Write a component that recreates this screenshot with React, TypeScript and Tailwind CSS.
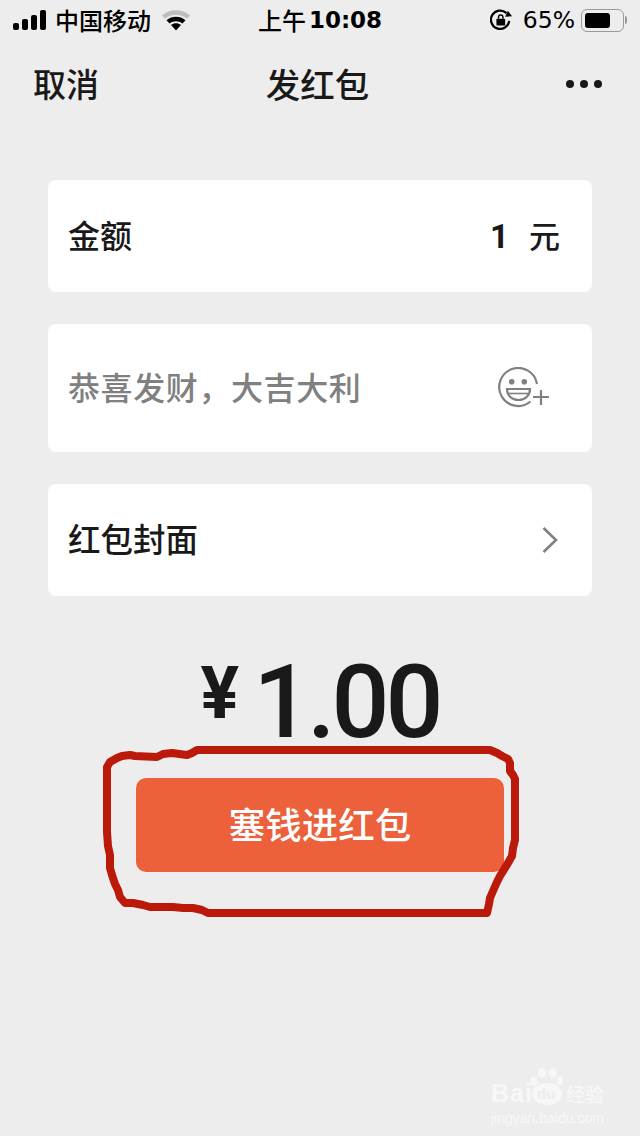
const cjk = "font-['Noto_Sans_CJK_SC','Noto_Sans',sans-serif]";

function SignalBars() {
  return (
    <svg width="33" height="20" viewBox="0 0 33 20" fill="#000">
      <rect x="0" y="13" width="6" height="7" rx="2" />
      <rect x="9" y="9" width="6" height="11" rx="2" />
      <rect x="18" y="5" width="6" height="15" rx="2" />
      <rect x="27" y="0" width="6" height="20" rx="2" />
    </svg>
  );
}

function Wifi() {
  return (
    <svg width="30" height="24" viewBox="0 0 30 24">
      <path d="M1 7.500C9 .5 21 .5 29 7.500l-3 3.200C19.500 5.500 10.500 5.500 4 10.700z" fill="#bdbdbd" />
      <path d="M5.500 12.300c5.500-4.600 13.500-4.600 19 0l-3 3.200c-3.800-3-9.200-3-13 0z" fill="#000" />
      <path d="M10 17c3-2.300 7-2.300 10 0l-5 5.500z" fill="#000" />
    </svg>
  );
}

function RotationLock() {
  return (
    <svg width="22" height="22" viewBox="0 0 24 24" fill="none">
      <path d="M21 13A10 10 0 1 1 18 4.500" stroke="#000" strokeWidth="2.400" />
      <path d="M24 8l-7.500.5 3-6.500z" fill="#000" />
      <rect x="7" y="10.500" width="9.500" height="7.500" rx="1" fill="#000" />
      <path d="M9.300 10.500V9a2.400 2.400 0 0 1 4.800 0v1.500" stroke="#000" strokeWidth="1.600" />
    </svg>
  );
}

function Battery() {
  return (
    <div className="flex items-center gap-[1px]">
      <div className="w-[43px] h-[23px] rounded-[6px] border-[1.5px] border-[#9a9a9a] p-[3px] flex">
        <div className="w-[25px] h-full rounded-[3px] bg-black" />
      </div>
      <div className="w-[2px] h-[8px] rounded-r-[2px] bg-[#9a9a9a]" />
    </div>
  );
}

function SmilePlus() {
  return (
    <svg width="52" height="42" viewBox="0 0 52 42" fill="none" stroke="#808080" strokeWidth="2.200">
      <path d="M39 17A19 19 0 1 0 32.500 34.500" />
      <circle cx="13.700" cy="14.700" r="2.800" fill="#808080" stroke="none" />
      <circle cx="26.300" cy="14.700" r="2.800" fill="#808080" stroke="none" />
      <path d="M9 22h23c0 6.500-5 11-11.500 11S9 28.500 9 22z" />
      <path d="M11 26.500h19" strokeWidth="1.600" />
      <path d="M35 30h16M43 23v15" />
    </svg>
  );
}

function Chevron() {
  return (
    <svg width="18" height="28" viewBox="0 0 18 28" fill="none">
      <path d="M2.500 2L15 14 2.500 26" stroke="#808080" strokeWidth="2.600" />
    </svg>
  );
}

function Scribble() {
  return (
    <svg className="absolute left-0 top-0 pointer-events-none" width="640" height="1136" fill="none">
      <path
        d="M197 750L490 750L497 753L502 756L508 759L510 763L510 771L513 775L515 779L515 840L513 848L512 856L508 863L505 868L500 876L497 882L493 891L490 898L489 904L487 913L208 913L202 910L193 908L183 908L173 907L150 907L143 905L133 903L125 903L120 897L118 890L115 884L112 875L110 868L110 855L108 846L107 832L107 767L110 762L117 758L122 756L130 755L135 756L157 757L163 754L172 753L187 755L192 753z"
        stroke="#bb1a0a"
        strokeWidth="8"
        strokeLinejoin="round"
      />
    </svg>
  );
}

function Watermark() {
  return (
    <div className="absolute left-[491px] top-[1068px] w-[120px] text-[#f7f7f7]">
      <svg className="absolute left-[39px] top-0" width="34" height="38" viewBox="0 0 34 38" fill="#f7f7f7">
        <ellipse cx="4" cy="13" rx="3.500" ry="5" />
        <ellipse cx="12" cy="5" rx="4" ry="5" />
        <ellipse cx="23" cy="5" rx="4" ry="5" />
        <ellipse cx="30" cy="13" rx="3" ry="5" />
        <ellipse cx="17" cy="26" rx="15" ry="11" />
      </svg>
      <div className="flex items-center h-[26px] mt-[12px] relative">
        <span className="font-['Liberation_Sans',sans-serif] font-bold text-[25px] leading-none w-[45px] tracking-[1px]">Bai</span>
        <span className="font-['Liberation_Sans',sans-serif] font-bold text-[15px] leading-none w-[30px] pl-[1px] text-[#ededed]">du</span>
        <span className={`${cjk} text-[19px] leading-none font-medium`}>经验</span>
      </div>
      <div className="font-['Liberation_Sans',sans-serif] text-[14px] leading-none mt-[5px] whitespace-nowrap">jingyan.baidu.com</div>
    </div>
  );
}

export default function App() {
  return (
    <div className={`relative w-[640px] h-[1136px] overflow-hidden bg-[#ededed] text-[#191919] ${cjk}`}>
      {/* status bar */}
      <div className="h-[40px] pl-[13px] pr-[13px] flex items-center justify-between text-black">
        <div className="flex items-center w-[200px]">
          <SignalBars />
          <span className="ml-[9px] text-[24px] leading-none font-medium">中国移动</span>
          <div className="ml-[10px]"><Wifi /></div>
        </div>
        <div className="flex items-center">
          <span className="text-[24px] leading-none font-medium">上午</span>
          <span className="ml-[3px] font-['DejaVu_Sans',sans-serif] font-bold text-[23px] leading-none">10:08</span>
        </div>
        <div className="flex items-center w-[200px] justify-end">
          <RotationLock />
          <span className="ml-[11px] pt-[1px] font-['DejaVu_Sans',sans-serif] text-[23.500px] leading-none">65%</span>
          <div className="ml-[6px]"><Battery /></div>
        </div>
      </div>

      {/* nav */}
      <div className="h-[86px] pl-[33px] pr-[38px] flex items-center justify-between">
        <span className="text-[33px] leading-none w-[100px] font-medium">取消</span>
        <span className="text-[34.500px] leading-none font-medium">发红包</span>
        <div className="w-[100px] flex justify-end gap-[6px] pt-[2px]">
          <div className="w-[8px] h-[8px] rounded-full bg-[#191919]" />
          <div className="w-[8px] h-[8px] rounded-full bg-[#191919]" />
          <div className="w-[8px] h-[8px] rounded-full bg-[#191919]" />
        </div>
      </div>

      {/* form cards */}
      <div className="mt-[54px] mx-[48px] flex flex-col gap-[32px]">
        <div className="h-[112px] rounded-[8px] bg-white pl-[20px] pr-[32px] flex items-center justify-between">
          <span className="text-[32px] leading-none font-medium mb-[4px]">金额</span>
          <div className="flex items-center">
            <span className="font-['Roboto',sans-serif] font-bold text-[33px] leading-none">1</span>
            <span className="ml-[20px] text-[31px] leading-none font-medium mb-[3px]">元</span>
          </div>
        </div>
        <div className="h-[128px] rounded-[8px] bg-white pl-[20px] pr-[42px] flex items-center justify-between">
          <span className="text-[32px] leading-none text-[#808080] tracking-[0.6px] font-medium mb-[4px]">恭喜发财，大吉大利</span>
          <SmilePlus />
        </div>
        <div className="h-[112px] rounded-[8px] bg-white pl-[20px] pr-[33px] flex items-center justify-between">
          <span className="text-[32.500px] leading-none font-medium mb-[3px]">红包封面</span>
          <Chevron />
        </div>
      </div>

      {/* amount */}
      <div className="mt-[54px] h-[104px] flex items-center justify-center font-['Roboto',sans-serif]">
        <span className="font-bold text-[72px] leading-none mb-[16px] mr-[14px]">¥</span>
        <span className="font-medium text-[102px] leading-none tracking-[-4px]">1.00</span>
      </div>

      {/* submit */}
      <div className="mt-[24px] flex justify-center">
        <button className="w-[368px] h-[94px] rounded-[10px] bg-[#ec603b] text-white text-[36.500px] leading-none font-medium pb-[2px]">
          塞钱进红包
        </button>
      </div>

      <Scribble />
      <Watermark />
    </div>
  );
}
